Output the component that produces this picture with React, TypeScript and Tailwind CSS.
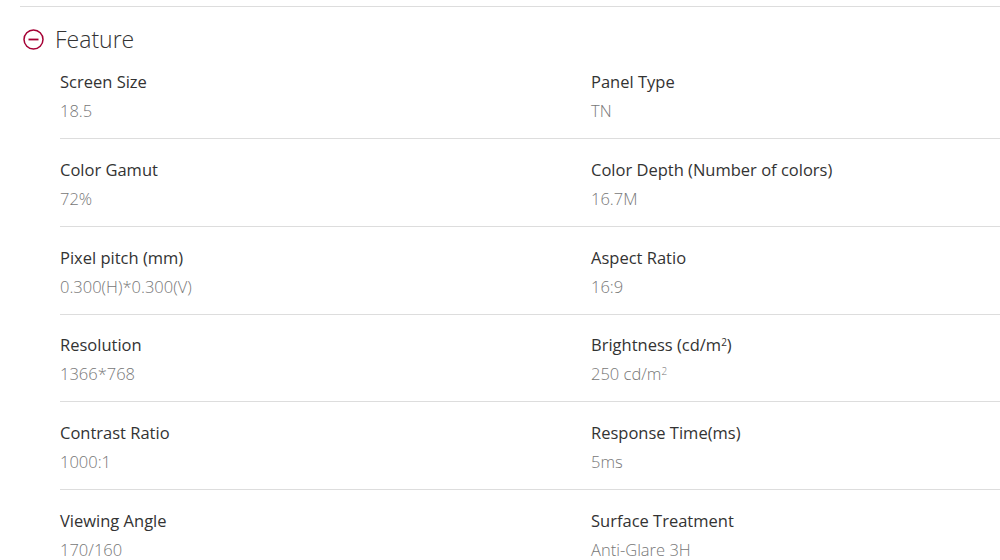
const specs: [string, string, React.ReactNode, React.ReactNode][] = [
  ["Screen Size", "18.5", "Panel Type", "TN"],
  ["Color Gamut", "72%", "Color Depth (Number of colors)", "16.7M"],
  ["Pixel pitch (mm)", "0.300(H)*0.300(V)", "Aspect Ratio", "16:9"],
  [
    "Resolution",
    "1366*768",
    <>
      Brightness (cd/m<sup className="text-[10px]">2</sup>)
    </>,
    <>
      250 cd/m<sup className="text-[10px]">2</sup>
    </>,
  ],
  ["Contrast Ratio", "1000:1", "Response Time(ms)", "5ms"],
  ["Viewing Angle", "170/160", "Surface Treatment", "Anti-Glare 3H"],
];

const SpecCell = ({ label, value }: { label: React.ReactNode; value: React.ReactNode }) => (
  <div className="flex flex-col gap-[5px]">
    <div className="text-[16.5px] leading-[24px] text-[#333333]">{label}</div>
    <div className="text-[16.5px] leading-[24px] font-light text-[#777777]">{value}</div>
  </div>
);

export default function App() {
  return (
    <div
      className="w-[1000px] h-[560px] overflow-hidden bg-white"
      style={{ fontFamily: '"Open Sans", "Noto Sans", sans-serif' }}
    >
      <div className="mt-[6px] ml-[20px] border-t border-[#dddddd]">
        <div className="flex items-center gap-[11px] pt-[17px] pl-[3px]">
          <svg width="21" height="21" viewBox="0 0 21 21" fill="none">
            <circle cx="10.5" cy="10.5" r="9.5" stroke="#a50034" strokeWidth="1.5" />
            <line x1="5.5" y1="10.5" x2="15.5" y2="10.5" stroke="#a50034" strokeWidth="1.8" />
          </svg>
          <h2 className="text-[23px] leading-[30px] font-light text-[#333333]">Feature</h2>
        </div>
      </div>

      <div className="ml-[60px] pt-[16px]">
        {specs.map(([l1, v1, l2, v2], i) => (
          <div
            key={i}
            className={`grid grid-cols-[531px_1fr] pb-[15px] ${i > 0 ? "border-t border-[#dddddd] pt-[18.75px]" : ""}`}
          >
            <SpecCell label={l1} value={v1} />
            <SpecCell label={l2} value={v2} />
          </div>
        ))}
      </div>
    </div>
  );
}
